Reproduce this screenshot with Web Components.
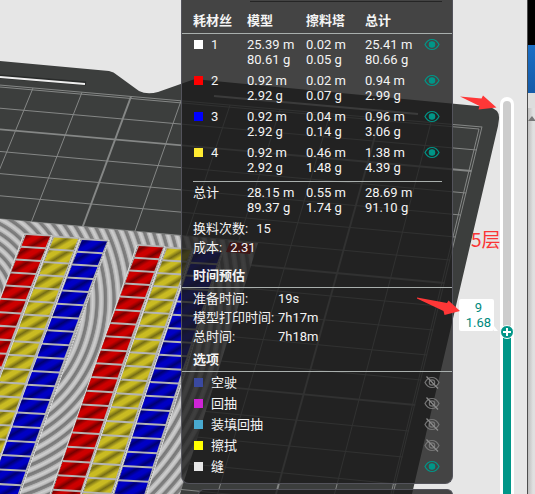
<!DOCTYPE html>
<html lang="zh-CN">
<head>
<meta charset="utf-8">
<title>切片预览</title>
<style>
html, body { height: 100%; margin: 0; }
body { background: #e6e6e6; font: 13px/15px Roboto, "Noto Sans CJK SC", sans-serif; overflow: hidden; }
</style>
</head>
<body>
<preview-app></preview-app>
<script>
const define = (name, html, setup) => customElements.define(name, class extends HTMLElement {
  constructor() {
    super();
    const t = document.createElement('template');
    t.innerHTML = html;
    this.attachShadow({ mode: 'open' }).append(t.content.cloneNode(true));
  }
  connectedCallback() { if (setup) setup.call(this, this.shadowRoot); }
});

/* Printed blocks on the plate: start x, start y, x step per row, width, colour, rows */
const columns = [
  [26, 235, 5.1, 24, '#cc0000', 20], [54, 237.5, 5.05, 24, '#c9bb22', 20], [82, 240, 5, 25, '#0000c4', 20],
  [139, 246, 4.78, 24, '#cc0000', 19], [167, 248.5, 4.65, 24, '#c9bb22', 19], [195, 251, 4.5, 26, '#0000c4', 19]
];
const rowY = (y0, n) => y0 + 12.7 * n + 0.05 * n * n;
function drawPlate() {
  const rightX = y => 482 - (y - 127) * 0.24;
  let s = '';
  [127,150,171,193,215,237,260,283,306,330,355,380,405,431,457,484,510,536].forEach((y, k) => {
    const x = rightX(y), ly = y - (0.087 + 0.0007 * k) * x;
    s += `<path d="M0 ${ly}L${x} ${y}" stroke-width="${k % 5 === 2 ? 1.8 : 1}"/>`;
  });
  [33,82,131,181,230,280,330,380,431,482].forEach((x, i) => {
    s += `<path d="M${x} ${88 + i * 4.3}L${393 - 58.5 * (9 - i)} 494" stroke-width="${i % 5 === 2 ? 1.9 : 1}"/>`;
  });
  return s + '<path d="M0 87L479 129L391 494"/>';
}
function drawBlocks() {
  let s = '';
  for (const [x, y, dx, w, fill, rows] of columns) {
    const bx = x - dx * rows, by = rowY(y, rows);
    s += `<path d="M${x-2} ${y-2}L${x+w+2} ${y}L${bx+w+6} ${by}L${bx-2} ${by}Z" fill="#b4b4b4"/>`;
    s += `<path d="M${x-2} ${y-1}L${bx-2} ${by}M${x+w+2} ${y}L${bx+w+6} ${by}" stroke="#dcdcdc" fill="none"/>`;
    s += `<path d="M${x-1} ${y}L${bx-1} ${by}M${x+w+1} ${y+1}L${bx+w+5} ${by}" stroke="#727272" stroke-dasharray="1 2" fill="none"/>`;
    for (let n = 0; n < rows; n++) {
      const cx = x - dx * n, cy = rowY(y, n), h = rowY(y, n + 1) - cy - 1.6, cw = w + n * 0.2, k = dx * h / (h + 1.6);
      const d = `M${cx} ${cy}L${cx+cw} ${cy+1.5}L${cx+cw-k} ${cy+h+1}L${cx-k} ${cy+h-0.5}Z`;
      s += `<path d="${d}" fill="${fill}"/><path d="${d}" fill="url(#shade)"/>`;
    }
  }
  return s + '<path d="M230 242L254 244L250 254L226 252Z" fill="#c40000"/>';
}
define('plate-scene', `
<style>:host{display:block;overflow:hidden} svg{display:block;width:100%;height:100%}</style>
<svg viewBox="0 0 535 494" preserveAspectRatio="xMaxYMin slice" aria-hidden="true">
<defs>
<radialGradient id="ridges" gradientUnits="userSpaceOnUse" cx="-40" cy="300" r="8.500" spreadMethod="repeat">
<stop offset="0" stop-color="#777"/><stop offset=".28" stop-color="#838383"/><stop offset=".36" stop-color="#b0b0b0"/><stop offset=".6" stop-color="#cfcfcf"/><stop offset=".85" stop-color="#b8b8b8"/><stop offset="1" stop-color="#777"/></radialGradient>
<linearGradient id="shade" gradientUnits="userSpaceOnUse" x1="0" y1="0" x2="3" y2="5" spreadMethod="reflect">
<stop offset=".3" stop-color="#000" stop-opacity="0"/><stop offset="1" stop-color="#000" stop-opacity=".42"/></linearGradient>
</defs>
<path fill="#3c3e3d" d="M0 61L109 71Q114 72 117 75L139 91Q147 95 158 92L192 80Q197 78 204 80L488 107Q500 109 499 119L498 126L412 494H0Z"/>
<g class="grid" fill="none" stroke="#858786"></g>
<path d="M0 76.500L86 83.500" stroke="#292b2a" stroke-width="4"/><path d="M0 77L85 84" stroke="#eee" stroke-width="2"/>
<path d="M214 96L418 114" stroke="#b8b8b8" stroke-width="2"/>
<path fill="url(#ridges)" d="M0 219L258 243L180 494H0Z"/>
<g class="blocks"></g>
</svg>`, function (r) {
  r.querySelector('.grid').innerHTML = drawPlate();
  r.querySelector('.blocks').innerHTML = drawBlocks();
});

define('eye-toggle', `
<style>
:host{display:block;width:16px;height:15px;color:#777}
:host([on]){color:#009688}
button{all:unset;display:block;width:16px;height:15px;cursor:pointer}
svg{display:block;width:16px;height:15px}
.slash{stroke:#8c8c8c} :host([on]) .slash{display:none}
.pupil{fill:none;stroke:currentColor} :host([on]) .pupil{fill:currentColor}
</style>
<button type="button"><svg viewBox="0 0 16 15" fill="none" stroke="currentColor" stroke-width="1.200">
<path d="M1 7.500Q3.500 2.500 8 2.500T15 7.500Q12.500 12.500 8 12.500T1 7.500Z"/><circle class="pupil" cx="8" cy="7.500" r="2.700"/>
<path class="slash" d="M2.500 1.500L14 13.500"/></svg></button>`, function (r) {
  const b = r.querySelector('button');
  b.setAttribute('aria-label', '显示 ' + this.getAttribute('name'));
  b.setAttribute('aria-pressed', this.hasAttribute('on'));
  b.onclick = () => b.setAttribute('aria-pressed', this.toggleAttribute('on'));
});

define('color-swatch', `<style>:host{display:inline-block;width:9px;height:9px;margin:0 8px 0 1px}div{width:100%;height:100%}</style><div></div>`,
  function (r) { r.querySelector('div').style.background = this.getAttribute('color'); });

const usage = [
  ['#ffffff', 1, '25.39 m', '80.61 g', '0.02 m', '0.05 g', '25.41 m', '80.66 g'],
  ['#ff0000', 2, '0.92 m', '2.92 g', '0.02 m', '0.07 g', '0.94 m', '2.99 g'],
  ['#0000ff', 3, '0.92 m', '2.92 g', '0.04 m', '0.14 g', '0.96 m', '3.06 g'],
  ['#ffeb31', 4, '0.92 m', '2.92 g', '0.46 m', '1.48 g', '1.38 m', '4.39 g']
];
define('filament-table', `
<style>
:host{display:block}
table{width:100%;table-layout:fixed;border-collapse:separate;border-spacing:0}
th,td{padding:3px 0;text-align:left;vertical-align:top;font-weight:400;white-space:nowrap}
th:first-child{padding-left:11px}
thead th{font-weight:700;line-height:19px;padding:9px 0 3px;border-bottom:1px solid #a9afad}
.c0{width:65px}.c1,.c2{width:59px}
tfoot th,tfoot td{padding:7px 0 0}
tfoot tr{background:linear-gradient(#a9afad,#a9afad) 11px 3px/calc(100% - 21px) 1px no-repeat}
</style>
<table><colgroup><col class="c0"><col class="c1"><col class="c2"><col class="c1"><col></colgroup>
<thead><tr><th>耗材丝</th><th>模型</th><th>擦料塔</th><th>总计</th><th></th></tr></thead>
<tbody>${usage.map(u => `<tr><th><color-swatch color="${u[0]}"></color-swatch>${u[1]}</th><td>${u[2]}<br>${u[3]}</td><td>${u[4]}<br>${u[5]}</td><td>${u[6]}<br>${u[7]}</td><td><eye-toggle on name="${u[1]}"></eye-toggle></td></tr>`).join('')}</tbody>
<tfoot><tr><th>总计</th><td>28.15 m<br>89.37 g</td><td>0.55 m<br>1.74 g</td><td>28.69 m<br>91.10 g</td><td></td></tr></tfoot>
</table>`);

define('panel-section', `
<style>:host{display:block}h2{margin:0;padding:4px 11px 2px;font-size:13px;line-height:19px;border-bottom:1px solid #a9afad}</style>
<h2><slot name="title"></slot></h2><slot></slot>`);

define('option-row', `
<style>:host{display:flex;align-items:center;height:21px;padding:0 12px 0 11px}span{flex:1}</style>
<color-swatch></color-swatch><span><slot></slot></span><eye-toggle></eye-toggle>`, function (r) {
  r.querySelector('color-swatch').shadowRoot.querySelector('div').style.background = this.getAttribute('color');
  r.querySelector('eye-toggle').toggleAttribute('on', this.hasAttribute('on'));
  r.querySelector('eye-toggle').shadowRoot.querySelector('button').setAttribute('aria-label', '显示 ' + this.textContent);
});

define('stats-panel', `
<style>
:host{display:block;box-sizing:border-box;color:#f4f4f4;background:rgba(27,27,27,.8);border:1px solid #53535b;border-top:0;border-radius:0 0 8px 8px;padding-bottom:6px}
.edge{height:2px;box-sizing:border-box;margin:0 10px 0 68px;border-bottom:1px solid #252525}
dl{margin:0;padding:4px 11px 5px;line-height:19px}
dl div{display:flex;gap:8px}
dt,dd{margin:0;white-space:nowrap}
.times{padding:1px 11px 0}.times div{display:grid;grid-template-columns:80px 1fr;gap:5px}
</style>
<div class="edge"></div>
<filament-table></filament-table>
<dl><div><dt>换料次数:</dt><dd>15</dd></div><div><dt>成本:</dt><dd>2.31</dd></div></dl>
<panel-section><span slot="title">时间预估</span>
<dl class="times"><div><dt>准备时间:</dt><dd>19s</dd></div><div><dt>模型打印时间:</dt><dd>7h17m</dd></div><div><dt>总时间:</dt><dd>7h18m</dd></div></dl></panel-section>
<panel-section><span slot="title">选项</span>
<option-row color="#3a49a0">空驶</option-row><option-row color="#ce24d6">回抽</option-row><option-row color="#48a9cf">装填回抽</option-row><option-row color="#ffff00">擦拭</option-row><option-row color="#e6e6e6" on>缝</option-row></panel-section>`);

define('layer-slider', `
<style>
:host{display:grid;width:14px;box-sizing:border-box;background:#fff;border-radius:7px 7px 0 0}
.fill,input{grid-area:1/1}
.fill{margin:4px 3px 0;border-radius:4px 4px 0 0;background:linear-gradient(to top,#009688 42%,#cdcdcd 42%)}
input{appearance:none;-webkit-appearance:none;writing-mode:vertical-lr;direction:rtl;width:14px;height:100%;min-height:0;margin:0;background:none}
input::-webkit-slider-runnable-track{width:14px;height:100%;background:none}
input::-webkit-slider-thumb{-webkit-appearance:none;width:14px;height:14px;box-sizing:border-box;border:1px solid #fff;border-radius:50%;background:linear-gradient(#fff,#fff) center/8px 2px no-repeat,linear-gradient(#fff,#fff) center/2px 8px no-repeat,#009688}
</style>
<div class="fill"></div><input type="range" aria-label="层" min="0" max="1000" value="406">`, function (r) {
  const i = r.querySelector('input'), f = r.querySelector('.fill');
  i.oninput = () => { const p = i.value / 10 + 1.4; f.style.background = `linear-gradient(to top,#009688 ${p}%,#cdcdcd ${p}%)`; };
});

define('layer-tag', `
<style>:host{display:block;position:relative;box-sizing:border-box;background:#fff;color:#00897d;text-align:center;padding:1px 0 1px 4px;width:35px;border-radius:2px}
svg{position:absolute;left:100%;bottom:0;width:4px;height:5px}</style>
<slot></slot><svg viewBox="0 0 4 5"><path d="M0 0L4 5H0Z" fill="#fff"/></svg>`);

define('desktop-edge', `
<style>
:host{display:grid;grid-template-rows:45px 48px 15px 1fr;width:8px;box-sizing:border-box;border-left:1px solid #4d4d4d;background:linear-gradient(90deg,#bdbdbd,#e0e0e0 5px)}
.a{background:#000}.b{background:linear-gradient(#1b6fc6,#155ba8)}.c{background:#ddd}
svg{width:7px;height:5px;margin-top:8px}
</style><div class="a"></div><div class="b"></div><div class="c"></div><svg viewBox="0 0 7 5"><path d="M0 5L4 0L7 4V5Z" fill="#777"/></svg>`);

define('preview-app', `
<style>
:host{display:flex;position:relative;justify-content:flex-end;height:100%;min-height:494px;overflow:hidden}
plate-scene{position:absolute;inset:0}
.side{position:relative;width:272px;display:flex;flex-direction:column;gap:5px}
.next{flex:1;min-height:5px;margin-left:17px;background:rgba(27,27,27,.8);border:1px solid #53535b;border-bottom:0;border-radius:8px 8px 0 0}
.rail{position:relative;width:74px;display:flex;justify-content:flex-end}
layer-slider{margin:97px 13px 0 0}
desktop-edge{position:relative}
layer-tag{position:absolute;left:6px;top:299px}
.note{position:absolute;left:18px;top:228px;font:19px/22px "Noto Sans CJK SC",sans-serif;color:#fa3535;white-space:nowrap}
.arrows{position:absolute;right:28px;top:90px;width:90px;height:230px}
</style>
<plate-scene></plate-scene>
<div class="side"><stats-panel></stats-panel><div class="next"></div></div>
<div class="rail"><layer-slider></layer-slider><layer-tag>9<br>1.68</layer-tag><div class="note">5层</div></div>
<desktop-edge></desktop-edge>
<svg class="arrows" viewBox="0 0 90 230" fill="#ff3737" aria-hidden="true">
<path d="M43 6.500L64.500 8.500L66 5.500L79.500 17.500L61.500 19.500L62.500 16Z"/><path d="M-3 207L30 213L31.500 210.500L43 221L27.500 225L26.500 221Z"/></svg>`);
</script>
</body>
</html>
